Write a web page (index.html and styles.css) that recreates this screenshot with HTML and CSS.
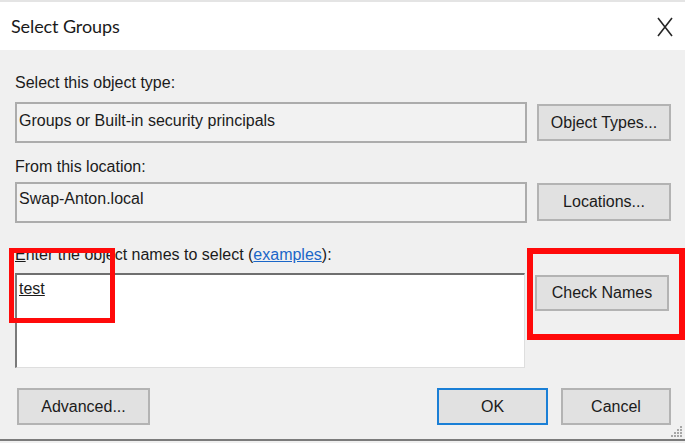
FILE: index.html
```html
<!DOCTYPE html>
<html lang="en">
<head>
<meta charset="utf-8">
<title>Select Groups</title>
<link rel="stylesheet" href="styles.css">
</head>
<body>
<div class="dialog">
  <header class="titlebar">
    <span class="title">Select Groups</span>
    <span class="close" aria-label="Close">
      <svg width="16" height="20" viewBox="0 0 16 20"><path d="M1 1 L15 19 M15 1 L1 19" stroke="#262626" stroke-width="1.6" fill="none"/></svg>
    </span>
  </header>
  <main class="content">
    <div class="label l1">Select this object type:</div>
    <div class="row r1">
      <div class="field">Groups or Built-in security principals</div>
      <button class="btn">Object Types...</button>
    </div>
    <div class="label l2">From this location:</div>
    <div class="row r2">
      <div class="field">Swap-Anton.local</div>
      <button class="btn btn-loc">Locations...</button>
    </div>
    <div class="label l3"><span class="acc">E</span>nter the object names to select (<a class="link" href="#">examples</a>):</div>
    <div class="row r3">
      <div class="names"><span class="name">test</span></div>
      <button class="btn btn-check">Check Names</button>
    </div>
    <div class="row actions">
      <button class="btn btn-adv">Advanced...</button>
      <div class="right-actions">
        <button class="btn btn-ok">OK</button>
        <button class="btn btn-cancel">Cancel</button>
      </div>
    </div>
    <span class="mark mark-a"></span>
    <span class="mark mark-b"></span>
    <span class="grip">
      <svg width="12" height="12" viewBox="0 0 12 12" fill="#a6a6a6">
        <rect x="9" y="1" width="2" height="2"/>
        <rect x="6" y="4" width="2" height="2"/><rect x="9" y="4" width="2" height="2"/>
        <rect x="3" y="7" width="2" height="2"/><rect x="6" y="7" width="2" height="2"/><rect x="9" y="7" width="2" height="2"/>
        <rect x="0" y="10" width="2" height="2"/><rect x="3" y="10" width="2" height="2"/><rect x="6" y="10" width="2" height="2"/><rect x="9" y="10" width="2" height="2"/>
      </svg>
    </span>
  </main>
  <footer class="bottomline"></footer>
</div>
</body>
</html>
```
FILE: styles.css
```css
* { box-sizing: border-box; }
html, body { margin: 0; padding: 0; }
body {
  width: 685px;
  height: 443px;
  overflow: hidden;
  background: #f0f0f0;
  font-family: "Liberation Sans", Arial, sans-serif;
  font-size: 16px;
  color: #1b1b1b;
}
.dialog {
  width: 685px;
  height: 443px;
  display: flex;
  flex-direction: column;
  position: relative;
}
.titlebar {
  height: 50px;
  flex: none;
  background: #ffffff;
  border-top: 2px solid #e4e4e4;
  display: flex;
  align-items: center;
  justify-content: space-between;
  padding: 0 12px 0 11px;
}
.title {
  font-family: Lato, "Liberation Sans", sans-serif;
  font-size: 18px;
  color: #1a1a1a;
  letter-spacing: -0.1px;
}
.close {
  display: flex;
  width: 16px;
  height: 20px;
  margin-top: 2px;
}
.content {
  flex: 1;
  position: relative;
  padding: 0 14px 0 15px;
  display: flex;
  flex-direction: column;
}
.label {
  line-height: 18px;
  height: 18px;
  white-space: nowrap;
}
.l1 { margin-top: 24px; }
.l2 { margin-top: 15px; }
.l3 { margin-top: 23px; }
.acc { text-decoration: underline; }
.link { color: #1a66c8; text-decoration: underline; }
.row {
  display: flex;
  align-items: center;
  gap: 10px;
}
.r1 { margin-top: 10px; height: 41px; }
.r2 { margin-top: 6px; height: 41px; }
.r3 { margin-top: 9px; height: 95px; align-items: flex-start; }
.field {
  width: 512px;
  height: 41px;
  border: 2px solid #acacac;
  background: #f2f2f2;
  padding: 0 0 4px 2px;
  display: flex;
  align-items: center;
  white-space: nowrap;
}
.r2 .field { padding-bottom: 8px; }
.names {
  width: 510px;
  height: 95px;
  background: #ffffff;
  border-top: 2px solid #6f6f6f;
  border-left: 2px solid #7a7a7a;
  border-right: 1px solid #dedede;
  border-bottom: 1px solid #dedede;
  padding: 5px 2px;
  line-height: 18px;
}
.name { text-decoration: underline; }
.btn {
  font-family: "Liberation Sans", Arial, sans-serif;
  font-size: 16px;
  color: #1b1b1b;
  background: #e1e1e1;
  border: 2px solid #b3b3b3;
  height: 37px;
  width: 134px;
  padding: 0;
  margin: 0;
  text-align: center;
  white-space: nowrap;
}
.btn-loc { height: 38px; margin-top: -1px; }
.btn-check { height: 36px; margin-top: 2px; }
.actions {
  margin-top: 20px;
  height: 37px;
  justify-content: space-between;
}
.btn-adv { width: 133px; margin-left: 2px; }
.right-actions { display: flex; gap: 13px; }
.btn-ok { width: 111px; border-color: #1a7fd6; }
.btn-cancel { width: 110px; }
.mark {
  position: absolute;
  border: 5px solid #ff0a0a;
}
.mark-a { left: 9px; top: 198px; width: 106px; height: 75px; }
.mark-b { left: 527px; top: 198px; width: 158px; height: 92px; border-width: 6px; }
.grip {
  position: absolute;
  right: 2px;
  bottom: 2px;
  display: flex;
}
.bottomline {
  flex: none;
  height: 4px;
  border-top: 2px solid #7b7b7b;
  background: #f0f0f0;
}
```
